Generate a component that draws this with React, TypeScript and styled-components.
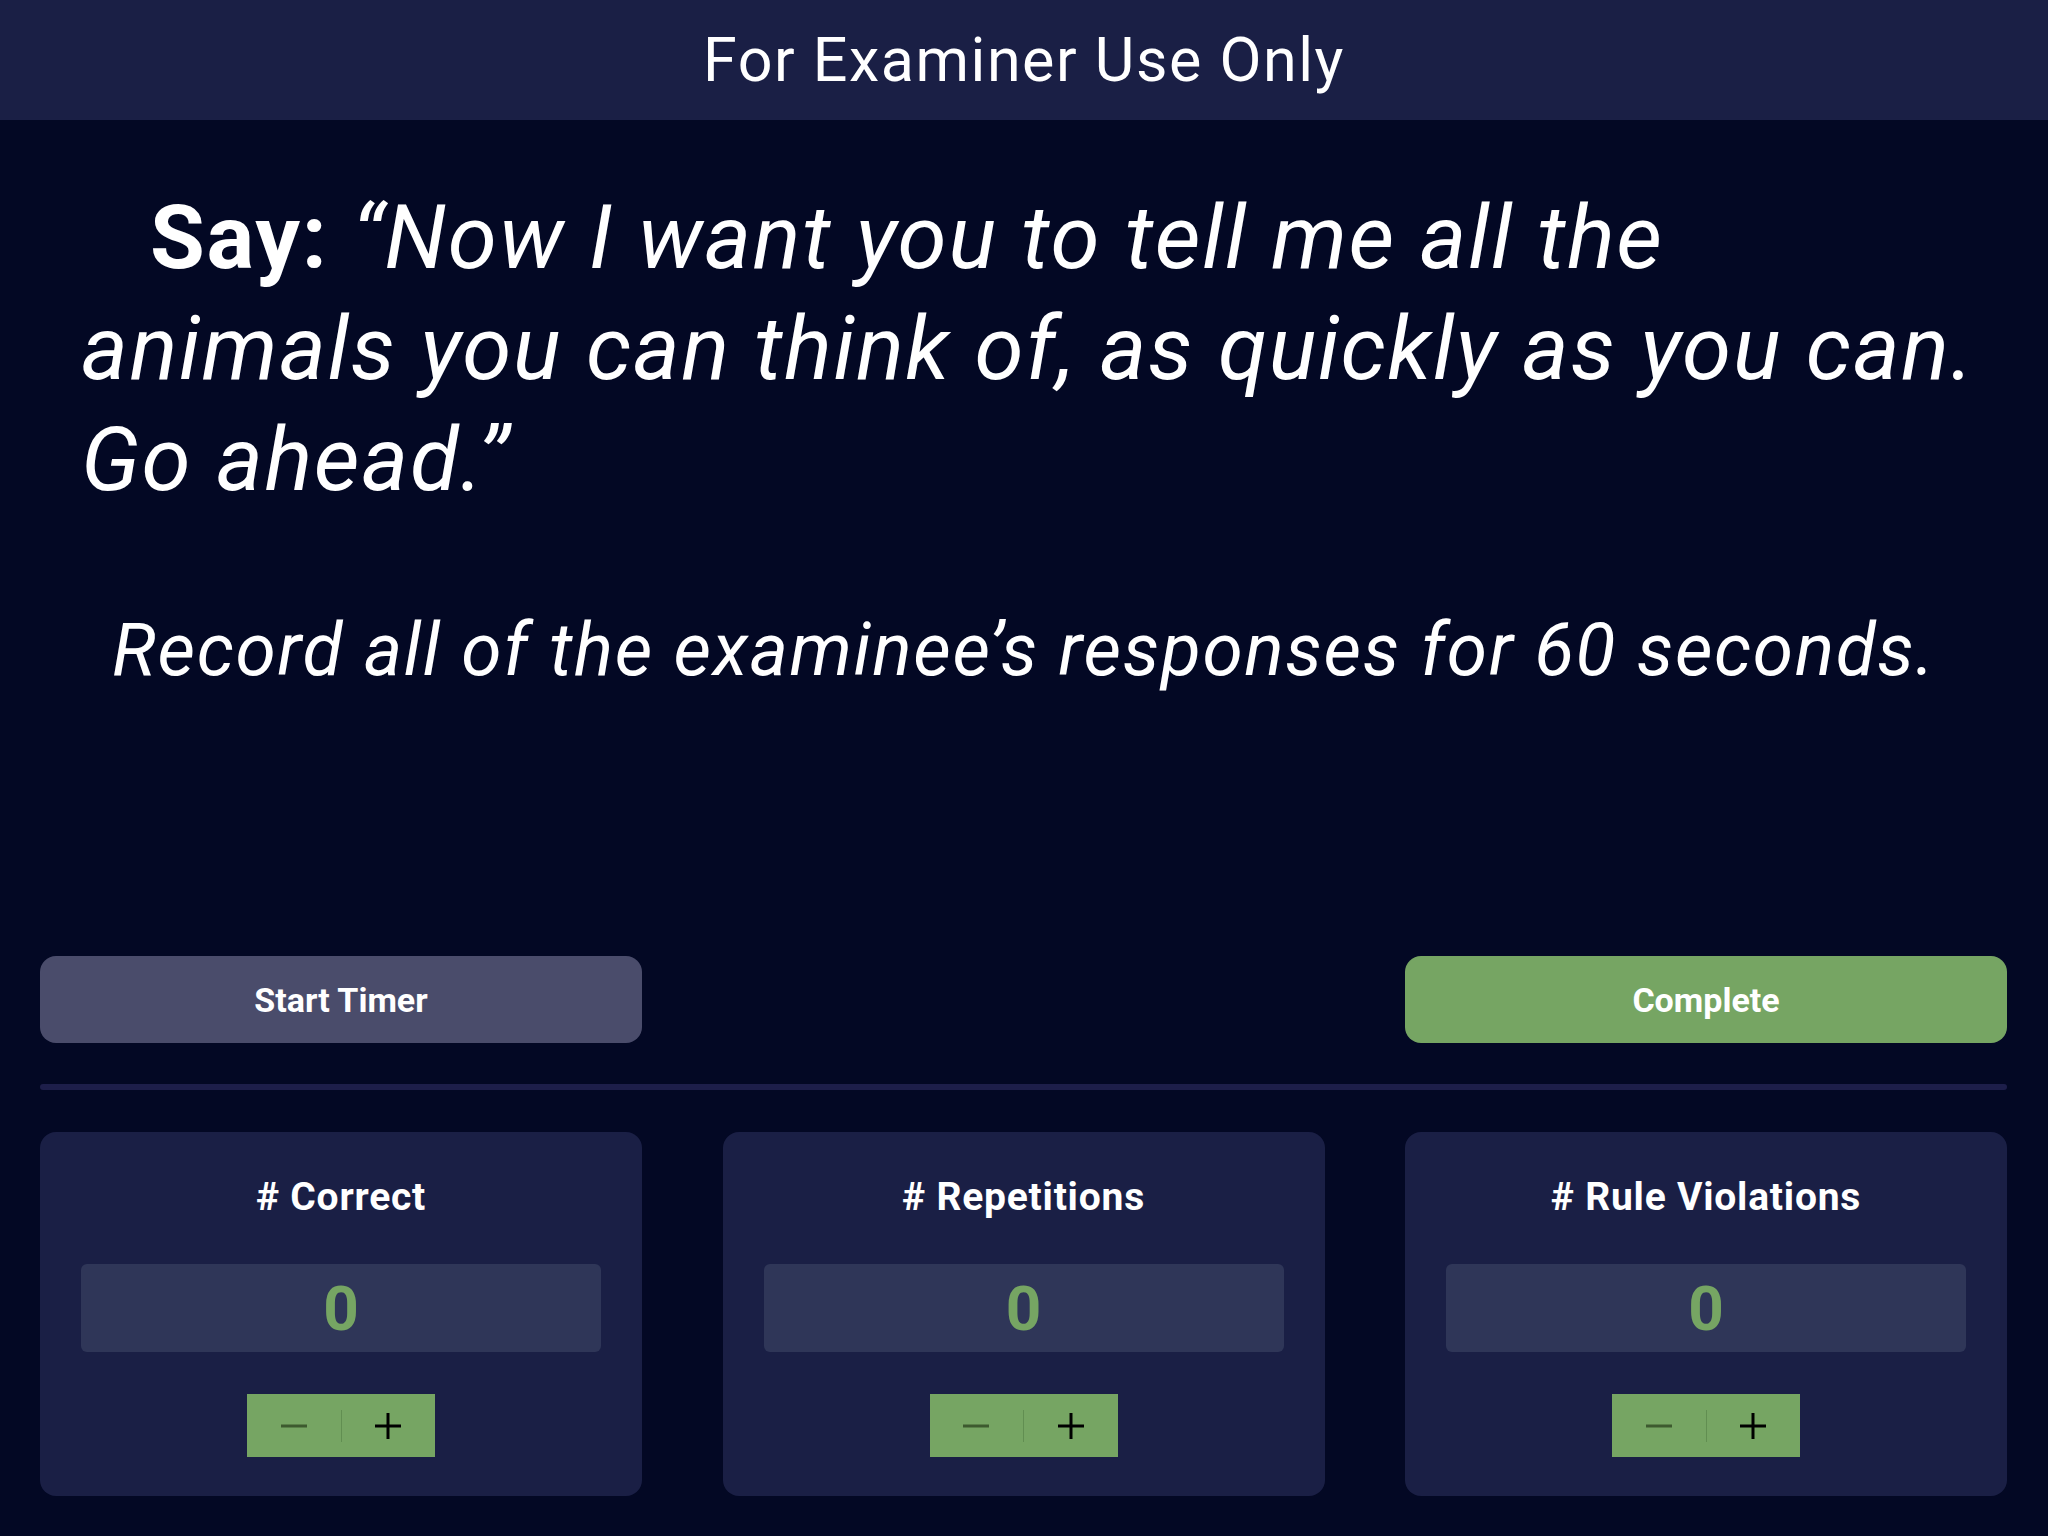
import React, { useState } from 'react'
import styled, { createGlobalStyle } from 'styled-components'

const bg = '#030824'
const navy = '#1a1f45'
const boxBlue = '#2f3658'
const slate = '#4a4c6b'
const green = '#76a563'
const white = '#ffffff'

const GlobalStyle = createGlobalStyle`
  html, body {
    margin: 0;
    padding: 0;
    background: ${bg};
  }
  body {
    font-family: Roboto, 'Noto Sans', sans-serif;
    color: ${white};
  }
`

const Page = styled.div`
  display: flex;
  flex-direction: column;
  width: 2048px;
  height: 1536px;
  background: ${bg};
  overflow: hidden;
`

const Header = styled.header`
  display: flex;
  align-items: center;
  justify-content: center;
  height: 120px;
  flex-shrink: 0;
  background: ${navy};
  font-size: 61px;
  font-weight: 400;
  letter-spacing: 0.025em;
`

const Prompt = styled.p`
  margin: 62px 30px 0 81px;
  font-size: 89px;
  line-height: 111px;
  font-style: italic;
  letter-spacing: 0.019em;
  text-indent: 69px;
  b {
    font-style: normal;
    font-weight: 700;
  }
`

const Instruction = styled.p`
  margin: 85px 0 0;
  text-align: center;
  font-size: 73px;
  line-height: 100px;
  font-style: italic;
  letter-spacing: 0.023em;
`

const Controls = styled.section`
  display: flex;
  flex-direction: column;
  margin-top: auto;
  padding: 0 41px 40px 40px;
`

const ButtonRow = styled.div`
  display: flex;
  justify-content: space-between;
`

const ActionButton = styled.button<{ $tone: 'slate' | 'green' }>`
  width: 602px;
  height: 87px;
  border: 0;
  border-radius: 16px;
  background: ${({ $tone }) => ($tone === 'green' ? green : slate)};
  color: ${white};
  font-family: Roboto, sans-serif;
  font-size: 34px;
  font-weight: 700;
  cursor: pointer;
`

const Divider = styled.hr`
  height: 6px;
  margin: 41px 0 42px;
  border: 0;
  border-radius: 3px;
  background: #1d1e4a;
`

const CardGrid = styled.div`
  display: grid;
  grid-template-columns: repeat(3, 602px);
  justify-content: space-between;
`

const Card = styled.div`
  display: flex;
  flex-direction: column;
  align-items: center;
  height: 364px;
  box-sizing: border-box;
  padding: 40px 41px 0;
  border-radius: 16px;
  background: ${navy};
`

const CardTitle = styled.h3`
  margin: 0;
  font-size: 39px;
  line-height: 50px;
  font-weight: 700;
  letter-spacing: 0.02em;
`

const ValueBox = styled.div`
  display: flex;
  align-items: center;
  justify-content: center;
  align-self: stretch;
  height: 88px;
  margin-top: 42px;
  border-radius: 6px;
  background: ${boxBlue};
  color: ${green};
  font-size: 62px;
  font-weight: 700;
`

const Stepper = styled.div`
  display: flex;
  align-items: center;
  width: 188px;
  height: 63px;
  margin-top: 42px;
  background: ${green};
`

const StepButton = styled.button<{ $dim?: boolean }>`
  display: flex;
  align-items: center;
  justify-content: center;
  flex: 1;
  height: 100%;
  padding: 0;
  border: 0;
  background: transparent;
  color: ${({ $dim }) => ($dim ? '#3d5a2f' : '#000')};
  cursor: pointer;
  svg {
    width: 28px;
    height: 28px;
  }
`

const StepSeparator = styled.span`
  width: 1px;
  height: 32px;
  background: rgba(60, 100, 50, 0.35);
`

const MinusIcon = () => (
  <svg viewBox="0 0 28 28" fill="none" stroke="currentColor" strokeWidth="3">
    <line x1="1" y1="14" x2="27" y2="14" />
  </svg>
)

const PlusIcon = () => (
  <svg viewBox="0 0 28 28" fill="none" stroke="currentColor" strokeWidth="3">
    <line x1="1" y1="14" x2="27" y2="14" />
    <line x1="14" y1="1" x2="14" y2="27" />
  </svg>
)

type CounterProps = { label: string }

const Counter = ({ label }: CounterProps) => {
  const [count, setCount] = useState(0)
  return (
    <Card>
      <CardTitle>{label}</CardTitle>
      <ValueBox>{count}</ValueBox>
      <Stepper>
        <StepButton
          $dim={count === 0}
          aria-label="decrease"
          onClick={() => setCount((c) => Math.max(0, c - 1))}
        >
          <MinusIcon />
        </StepButton>
        <StepSeparator />
        <StepButton aria-label="increase" onClick={() => setCount((c) => c + 1)}>
          <PlusIcon />
        </StepButton>
      </Stepper>
    </Card>
  )
}

export default function App() {
  return (
    <>
      <GlobalStyle />
      <Page>
        <Header>For Examiner Use Only</Header>
        <Prompt>
          <b>Say:</b> “Now I want you to tell me all the
          <br />
          animals you can think of, as quickly as you can.
          <br />
          Go ahead.”
        </Prompt>
        <Instruction>
          Record all of the examinee’s responses for 60 seconds.
        </Instruction>
        <Controls>
          <ButtonRow>
            <ActionButton $tone="slate">Start Timer</ActionButton>
            <ActionButton $tone="green">Complete</ActionButton>
          </ButtonRow>
          <Divider />
          <CardGrid>
            <Counter label="# Correct" />
            <Counter label="# Repetitions" />
            <Counter label="# Rule Violations" />
          </CardGrid>
        </Controls>
      </Page>
    </>
  )
}
